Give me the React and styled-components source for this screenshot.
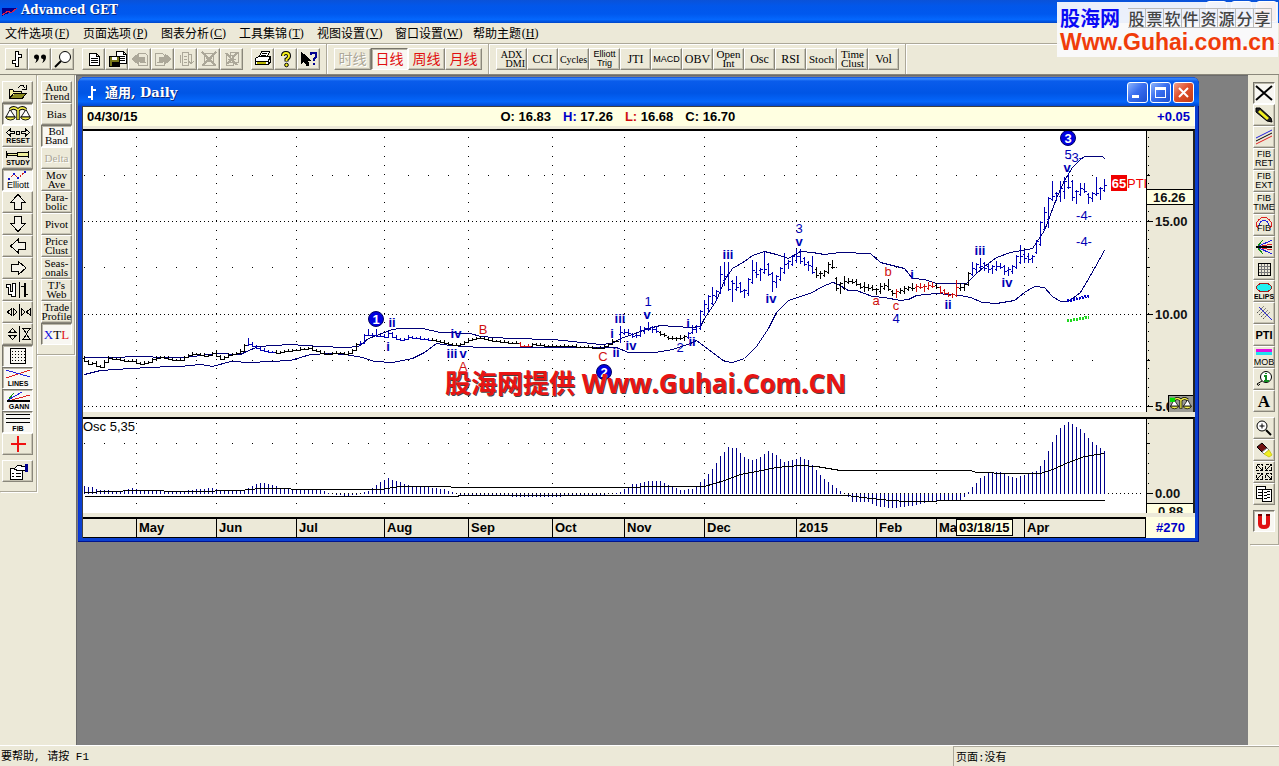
import React from 'react'
import styled, { createGlobalStyle, css } from 'styled-components'

const face = '#ece9d8'
const ink = '#00008b'
const cjk = '"Liberation Mono", "Noto Sans CJK SC", monospace'
const caption = '"DejaVu Serif", "Noto Sans CJK SC", serif'

const GlobalStyle = createGlobalStyle`
  * {
    box-sizing: border-box;
  }

  body {
    margin: 0;
    background: ${face};
    color: #000;
    font-family: 'Liberation Sans', 'Noto Sans CJK SC', sans-serif;
  }

  button {
    margin: 0;
    padding: 0;
    font: inherit;
    color: inherit;
  }

  svg {
    display: block;
  }
`

const Shell = styled.div`
  display: flex;
  flex-direction: column;
  min-height: 100vh;
  position: relative;
  overflow: hidden;
`

const TitleBar = styled.header`
  display: flex;
  align-items: center;
  gap: 4px;
  height: 23px;
  padding: 0 2px;
  color: #fff;
  font: bold 12px/16px ${caption};
  background: linear-gradient(#0a52d8, #0257ea 25%, #0058ee 60%, #0467fd 85%, #0045c8);

  h1 {
    flex: 1;
    margin: 0 0 3px;
    font: inherit;
    text-shadow: 1px 1px #0a2a80;
  }
`

const MenuBar = styled.nav`
  display: flex;
  height: 20px;
  padding-left: 5px;
`

const MenuItem = styled.button`
  display: flex;
  border: 0;
  background: none;
  margin-right: 12px;
  font: 12px/20px 'Noto Sans CJK SC', sans-serif;
  white-space: nowrap;

  span {
    width: 18px;
    font: 12px/20px 'Liberation Serif', serif;
    text-align: center;
  }
`

const ToolBar = styled.div`
  display: flex;
  height: 32px;
  border-top: 1px solid #aca899;
  box-shadow: inset 0 1px #fff;
  border-bottom: 1px solid #8a877b;
`

const Strip = styled.div`
  display: flex;
  padding: 4px 6px 0 ${(props) => props.$start || 7}px;
  border-right: 1px solid #aca899;
  box-shadow: 1px 0 #fff;
`

const Group = styled.div`
  display: flex;
  margin-right: ${(props) => props.$after || 0}px;
`

const raised = css`
  border: 1px solid;
  border-color: #fff #8a877b #8a877b #fff;
  box-shadow: inset -1px -1px #c5c2b2;
  background: ${face};
`

const sunken = css`
  border: 1px solid;
  border-color: #77756b #fff #fff #77756b;
  box-shadow: inset 1px 1px #b8b5a6;
  background: #f8f7f2;
`

const Tool = styled.button`
  display: flex;
  align-items: center;
  justify-content: center;
  flex: none;
  width: ${(props) => props.$w || 23}px;
  height: 22px;
  margin-bottom: ${(props) => props.$after || 0}px;
  color: ${(props) => props.$color || '#000'};
  font-family: ${(props) =>
    props.$sans ? '"Liberation Sans", sans-serif' : '"Liberation Serif", "Noto Sans CJK SC", serif'};
  font-size: ${(props) => props.$size || 11}px;
  font-weight: ${(props) => (props.$bold ? 700 : 400)};
  line-height: 9px;
  white-space: pre;
  text-align: center;
  ${(props) => (props.$on ? sunken : raised)}

  &:disabled {
    color: #aca899;
    text-shadow: 1px 1px #fff;
  }
`

const Workspace = styled.div`
  flex: 1;
  display: flex;
  align-items: stretch;
`

const Dock = styled.aside`
  display: flex;
  flex-direction: column;
  align-self: flex-start;
  width: ${(props) => props.$w}px;
  padding: ${(props) => props.$top || 6}px 0 ${(props) => props.$bottom || 9}px ${(props) => props.$start}px;
  border-right: 1px solid #aca899;
  border-bottom: 1px solid #aca899;
  box-shadow: 1px 1px #fff;
`

const Desktop = styled.main`
  flex: 1;
  min-width: 0;
  margin-left: 1px;
  margin-right: 2px;
  padding: 1px 49px 0 1px;
  background: #808080;
  border-left: 1px solid #6b6b6b;
  border-top: 1px solid #6b6b6b;
`

const ChartWindow = styled.section`
  border-radius: 7px 7px 0 0;
  padding: 0 4px 4px;
  background: #0a3fd0;
  box-shadow: inset -1px -1px #00138c, inset 1px 0 #0831d9;
`

const ChartTitle = styled.div`
  display: flex;
  align-items: center;
  gap: 2px;
  height: 29px;
  margin: 0 -4px;
  padding: 2px 5px 0 7px;
  border-radius: 7px 7px 0 0;
  color: #fff;
  background: linear-gradient(#0a4ad8, #3a8cff 6%, #0a5ceb 14%, #0055e5 55%, #0466fb 85%, #0148d2);

  h2 {
    flex: 1;
    margin: 0 0 0 4px;
    font: bold 13px/18px ${caption};
    text-shadow: 1px 1px #0a2a80;
  }
`

const CaptionButton = styled.button`
  width: 21px;
  height: 21px;
  border: 1px solid #fff;
  border-radius: 3px;
  background: ${(props) =>
    props.$close
      ? 'linear-gradient(135deg, #f0a08a, #e0502c 45%, #c23c14)'
      : 'linear-gradient(135deg, #8db4fb, #3a6ff0 45%, #1c4fd0)'};
`

const ChartBody = styled.div`
  background: ${face};
  border-left: 1px solid #404040;
`

const Quote = styled.div`
  display: grid;
  grid-template-columns: 10fr auto 11fr;
  align-items: center;
  height: 20px;
  padding: 0 4px;
  background: #ffffe1;
  border-top: 1px solid #404040;
  border-right: 1px solid #fff;
  font-size: 13px;
  font-weight: 700;
`

const Prices = styled.div`
  display: flex;
  gap: 12px;
`

const Delta = styled.div`
  color: #0000c8;
  text-align: right;
`

const Tint = styled.span`
  color: ${(props) => props.$color};
`

const Pane = styled.div`
  display: flex;
  position: relative;
  height: ${(props) => props.$h}px;
  margin-top: ${(props) => props.$before}px;
  border-top: 2px solid #000;
  border-right: 2px solid #222;
`

const Plot = styled.div`
  flex: 1;
  min-width: 0;
  overflow: hidden;
  background: #fff;
`

const Scale = styled.div`
  width: 47px;
  border-left: 1px solid #000;
`

const Watermark = styled.div`
  position: absolute;
  left: 362px;
  top: 232px;
  color: #e81414;
  font: bold 26px/40px 'Open Sans', 'Noto Sans CJK SC', sans-serif;
  text-shadow: 1px 1px #444;
  white-space: nowrap;
`

const TimeRow = styled.div`
  display: flex;
  position: relative;
  height: 21px;
  margin-top: 4px;
  background: #ffffe1;
`

const Months = styled.div`
  flex: 1;
  display: flex;
  min-width: 0;
  border: 1px solid #000;
  border-top-width: 2px;
  border-left: 0;
  background: ${face};
  font: bold 13px/17px 'Liberation Sans', sans-serif;
`

const Month = styled.div`
  width: ${(props) => props.$w}px;
  padding-left: 2px;
  border-left: ${(props) => (props.$first ? 0 : 1)}px solid #000;
`

const Cursor = styled.div`
  position: absolute;
  left: 873px;
  top: 2px;
  padding: 0 2px;
  border: 1px solid #000;
  background: #ffffe1;
  font: bold 13px/15px 'Liberation Sans', sans-serif;
`

const BarCount = styled.div`
  width: 49px;
  color: #0000c8;
  font: bold 13px/21px 'Liberation Sans', sans-serif;
  text-align: center;
`

const StatusBar = styled.footer`
  display: flex;
  height: 21px;
  border-top: 1px solid #fff;
  font: 11px/22px ${cjk};
`

const Help = styled.div`
  flex: 1;
  padding-left: 1px;
`

const PageInfo = styled.div`
  width: 326px;
  padding-left: 2px;
  border-left: 1px solid #aca899;
  border-top: 1px solid #aca899;
`

const Badge = styled.div`
  position: absolute;
  right: 1px;
  top: 2px;
  width: 221px;
  height: 55px;
  padding: 5px 3px 0;
  overflow: hidden;
  background: rgba(250, 250, 252, 0.94);
  white-space: nowrap;
`

const BadgeTop = styled.div`
  display: flex;
  align-items: center;
  gap: 8px;
  height: 22px;
  color: #0a0af5;
  font: 700 20px/22px 'Noto Sans CJK SC', sans-serif;
`

const Slogan = styled.div`
  display: flex;
  color: #444;
  font: 500 16px/18px 'Noto Sans CJK SC', sans-serif;

  span {
    width: 18px;
    height: 20px;
    border: 1px solid #bbb;
    border-left-width: 0;
    text-align: center;
  }
`

const BadgeUrl = styled.div`
  color: #f03c0a;
  font: bold 23px/26px 'Liberation Sans', sans-serif;
`

const Mark = styled.text`
  font: ${(props) => (props.$bold ? 700 : 400)} ${(props) => props.$size || 13}px 'Liberation Sans', sans-serif;
  text-anchor: ${(props) => props.$anchor || 'middle'};
  fill: ${(props) => props.$color || '#0000b4'};
`

// ---- icons ----

const Icon = ({ w = 20, h = 18, children }) => (
  <svg width={w} height={h} viewBox={`0 0 ${w} ${h}`} fill="none" stroke="#000" shapeRendering="crispEdges" aria-hidden="true">
    {children}
  </svg>
)

const Tag = ({ x, y, size = 8, bold, color = '#000', children }) => (
  <text x={x} y={y} fill={color} stroke="none" textAnchor="middle" fontSize={size} fontWeight={bold ? 700 : 400} fontFamily="Liberation Sans, sans-serif">
    {children}
  </text>
)

const Page = ({ x = 0, y = 0 }) => (
  <g transform={`translate(${x} ${y})`}>
    <path d="M.5 .5H7.5L10.5 3.5V12.5H.5ZM7.5 .5V3.5H10.5" fill="#fff" />
    <path d="M2 5.500H9M2 7.500H9M2 9.500H9" />
  </g>
)

const Scales = ({ small }) => (
  <g shapeRendering="auto">
    <path d="M6 4.500L2 12H11ZM22 4.500L17 12H26Z" fill="#fff" strokeWidth=".9" />
    <path d="M1.500 12H11.500Q10.500 15 6.500 15T1.500 12ZM16.500 12H26.500Q25.500 15 21.500 15T16.500 12Z" fill="#f3ef4a" strokeWidth=".9" />
    <path d="M6 4.500Q10 1 14 5Q18 1 22 4.500M14 4V15" strokeWidth="3.400" />
    <path d="M6 4.500Q10 1 14 5Q18 1 22 4.500M14 4V14.500" stroke="#f3ef4a" strokeWidth="1.600" />
    {small && <path d="M1 2H7V7H1Z" fill="#00e000" stroke="none" />}
  </g>
)

const greyBar = { stroke: '#aca899', strokeWidth: 1 }

const icons = {
  bars: (
    <g>
      <path d="M8.500 1.500H11.500V4.500H14.500V7.500H11.500V16.500H8.500V13.500H5.500V10.500H8.500Z" fill="#fff" />
    </g>
  ),
  quotes: (
    <g fill="#000" stroke="none" shapeRendering="auto">
      <path d="M4 7A2.500 2.500 0 1 1 9 7Q9 11 5 13Q7 10 6 9Q4 9 4 7ZM11 7A2.500 2.500 0 1 1 16 7Q16 11 12 13Q14 10 13 9Q11 9 11 7Z" />
    </g>
  ),
  lens: (
    <g shapeRendering="auto">
      <circle cx="12" cy="7" r="5.500" fill="#fff" />
      <path d="M8 11L2 17" strokeWidth="2" />
    </g>
  ),
  page: <Page x={5} y={3} />,
  save: (
    <g>
      <Page x={9} y={1} />
      <path d="M2.500 6.500H12.500V16.500H2.500Z" fill="#77771a" />
      <path d="M5 7H10V10H5Z" fill="#fff" stroke="none" />
      <path d="M5 12H11V16H5Z" fill="#000" />
    </g>
  ),
  back: (
    <g {...greyBar}>
      <path d="M8.500 3.500H15.500L17.500 5.500V15.500H8.500ZM10 12.500H16" />
      <path d="M2 9L8 4V7H14V11H8V14Z" fill="#aca899" />
    </g>
  ),
  next: (
    <g {...greyBar}>
      <path d="M2.500 3.500H9.500L11.500 5.500V15.500H2.500ZM4 12.500H10" />
      <path d="M18 9L12 4V7H6V11H12V14Z" fill="#aca899" />
    </g>
  ),
  turn: (
    <g {...greyBar}>
      <path d="M6.500 2.500H12.500V15.500H6.500ZM8 6.500H11M8 9.500H11M8 12.500H11M4.500 5V13M12 4H15V13M13 11L15 14L18 11" />
    </g>
  ),
  cut: (
    <g {...greyBar}>
      <path d="M5.500 3.500H14.500V15.500H5.500ZM7 8.500H13M7 11.500H13" />
      <path d="M3 2L17 16M17 2L3 16" strokeWidth="2" />
    </g>
  ),
  cutAll: (
    <g {...greyBar}>
      <path d="M4.500 5.500H11.500V15.500H4.500ZM8.500 2.500H16.500V12.500H8.500ZM6 9.500H14M6 12.500H14" />
      <path d="M4 3L15 15M15 3L5 14" strokeWidth="2" />
    </g>
  ),
  print: (
    <g>
      <path d="M6.500 6.500L8.500 1.500H16.500L14.500 6.500Z" fill="#fff" />
      <path d="M9 3.500H14M8 5.500H13" />
      <path d="M2.500 8.500L5.500 6.500H17.500L15.500 10.500V14.500H2.500ZM17.500 7V12L15.500 14.500M3 11.500H15" fill="#fff" />
      <path d="M4 13H13" stroke="#b8b400" strokeWidth="2" />
    </g>
  ),
  help: (
    <g shapeRendering="auto">
      <path d="M7 6Q7 3 10 3T13 6Q13 8 10.500 9.500V11.500" strokeWidth="4" />
      <path d="M7 6Q7 3 10 3T13 6Q13 8 10.500 9.500V11" stroke="#f6ee1c" strokeWidth="2" />
      <circle cx="10.500" cy="15" r="1.800" fill="#f6ee1c" />
    </g>
  ),
  whatsThis: (
    <g>
      <path d="M2 2V14L5 11L8 16L10 15L8 10H11Z" fill="#000" />
      <path d="M12 5V3H17V7L15 9V11M15 13V15" stroke="#000090" strokeWidth="2" />
    </g>
  ),
  open: (
    <g>
      <path d="M5.500 15.500V6.500H8.500L10 8.500H17.500V11M5.500 15.500L9.500 10.500H22.500L18 15.500Z" fill="#f3ef9a" />
      <path d="M6 15L10 11H21L17 15Z" fill="#8a8a20" stroke="none" />
      <path d="M14 4.500L17 2.500H19L21.500 5.500M22 2V6H18" />
    </g>
  ),
  scales: <Scales />,
  reset: (
    <g>
      <path d="M2.500 5.500L6.500 2V4.500H10.500V6.500H6.500V9ZM25.500 5.500L21.500 2V4.500H17.500V6.500H21.500V9ZM12.500 4.500H15.500V7.500H12.500Z" />
      <Tag x={14} y={16} size={7} bold>RESET</Tag>
    </g>
  ),
  study: (
    <g>
      <path d="M3.500 4.500H13.500V6.500H3.500ZM13.500 3.500H24.500V7.500H13.500ZM2.500 2V9M24.500 2V9" fill="#eeee9a" />
      <Tag x={14} y={16} size={7} bold>STUDY</Tag>
    </g>
  ),
  elliott: (
    <g>
      <path d="M5 8L10 3L14 7L21 1" stroke="#d02020" strokeDasharray="2 1" />
      <path d="M9 2H11V4H9ZM13 6H15V8H13ZM20 0H22V2H20ZM4 7H6V9H4Z" fill="#1414c8" stroke="none" />
      <Tag x={14} y={17} size={9}>Elliott</Tag>
    </g>
  ),
  up: <path d="M14 1.500L6.500 9.500H10.500V16.500H17.500V9.500H21.500Z" fill="#f4f2e8" />,
  down: <path d="M14 16.500L6.500 8.500H10.500V1.500H17.500V8.500H21.500Z" fill="#f4f2e8" />,
  left: <path d="M6.500 9L14.500 2V5.500H21.500V12.500H14.500V16Z" fill="#f4f2e8" />,
  right: <path d="M22 9L14 2V5.500H7.500V12.500H14V16Z" fill="#f4f2e8" />,
  barWidth: (
    <g>
      <path d="M2.500 3.500H6.500V10.500H8.500V2.500H11.500V15.500H7.500V13.500H4.500V6.500H2.500Z" fill="#fff" />
      <path d="M15.500 1V17M20.500 2V16M17 5.500H20M21 13.500H24" />
      <path d="M21.500 2V16" />
    </g>
  ),
  horiz: <path d="M7.500 5.500V12.500L3.500 9ZM9.500 5.500V12.500L13 9ZM15.500 1V17M17.500 5.500V12.500L21 9ZM26.500 5.500V12.500L22.500 9Z" />,
  vert: <path d="M5 7.500H12L8.500 3.500ZM5 10.500H12L8.500 14.500ZM15.500 1V17M19 3.500H26L22.500 8.500ZM19 14.500H26L22.500 9.500Z" />,
  grid: (
    <g>
      <path d="M6.500 1.500H21.500V16.500H6.500Z" />
      <path d="M8 4.500H21M8 7.500H21M8 10.500H21M8 13.500H21" strokeDasharray="1 2" />
    </g>
  ),
  lines: (
    <g>
      <path d="M2 9L26 1" stroke="#e02020" />
      <path d="M2 1L26 8" stroke="#2020e0" />
      <Tag x={14} y={17} size={7} bold>LINES</Tag>
    </g>
  ),
  gann: (
    <g>
      <path d="M4 9L10 2" stroke="#109010" />
      <path d="M4 9L18 1" stroke="#2020e0" />
      <path d="M4 10L26 4" stroke="#e02020" />
      <path d="M3 10H26" strokeWidth="2" />
      <Tag x={15} y={18} size={7} bold>GANN</Tag>
    </g>
  ),
  fib: (
    <g>
      <path d="M2 1.500H26M2 5.500H26M2 9.500H26" />
      <Tag x={14} y={18} size={7} bold>FIB</Tag>
    </g>
  ),
  cross: <path d="M14 1V7M14 11V17M7 9H12M16 9H22M14 7V11M12 9H16" stroke="#f01010" strokeWidth="2" />,
  props: (
    <g>
      <path d="M6.500 6.500H18.500V17.500H6.500Z" fill="#fff" />
      <path d="M8 11.500H10M12 11.500H17M8 14.500H10M12 14.500H17M10 7L14 3L21 5V8L15 9Z" fill="#fff" />
      <path d="M21 2H23V9H21Z" fill="#000090" stroke="#000090" />
    </g>
  ),
  close: <path d="M2 2L18 16M18 2L2 16" strokeWidth="2" shapeRendering="auto" />,
  pencil: (
    <g shapeRendering="auto">
      <path d="M2 2L6 2L17 12L18 16L13 15L2 6Z" fill="#222" />
      <path d="M5 5L14 13" stroke="#f3ef20" strokeWidth="3" />
    </g>
  ),
  channel: (
    <g shapeRendering="auto">
      <path d="M2 10L18 2" stroke="#2020e0" />
      <path d="M2 13L18 5" />
      <path d="M2 16L18 8" stroke="#e02020" />
    </g>
  ),
  arc: (
    <g>
      <path d="M2.500 9A7.500 7.500 0 0 1 17.500 9Q17 12 15 13M2.500 9Q3 12 5 13" stroke="#e02020" />
      <path d="M5.500 9A4.500 4.500 0 0 1 14.500 9" stroke="#2020e0" />
      <Tag x={10} y={15} size={9}>FIB</Tag>
    </g>
  ),
  fan: (
    <g>
      <path d="M3 9L9 2M3 9L9 16" stroke="#109010" />
      <path d="M3 9L18 2M3 9L18 16" stroke="#2020e0" />
      <path d="M3 9L18 6M3 9L18 12" stroke="#e02020" />
      <path d="M2 9H18" strokeWidth="2" />
    </g>
  ),
  smallGrid: (
    <g>
      <path d="M4.500 3.500H16.500V15.500H4.500Z" />
      <path d="M7.500 4V15M10.500 4V15M13.500 4V15M5 6.500H16M5 9.500H16M5 12.500H16" stroke="#777" />
    </g>
  ),
  ellipse: (
    <g>
      <ellipse cx="10" cy="5.500" rx="7.500" ry="4.500" fill="#20f0f0" stroke="#a02020" />
      <Tag x={10} y={17} size={7} bold>ELiPS</Tag>
    </g>
  ),
  fork: (
    <g stroke="#555" shapeRendering="auto">
      <path d="M3 9L10 2M5 11L12 4M7 13L14 6M9 15L16 8" strokeDasharray="2 1" />
      <path d="M5 3L18 16" stroke="#2020e0" />
    </g>
  ),
  mob: (
    <g>
      <path d="M2 2.500H18" stroke="#e010e0" strokeWidth="3" />
      <path d="M2 5.500H18" stroke="#20e0f0" strokeWidth="3" />
      <Tag x={10} y={17} size={9}>MOB</Tag>
    </g>
  ),
  info: (
    <g shapeRendering="auto">
      <circle cx="12" cy="7" r="5.500" fill="#fff" />
      <path d="M8 11L3 14Q4 17 6 14" />
      <path d="M10 6H12V11M10 11H15M12 3V4" stroke="#108a20" strokeWidth="2" />
    </g>
  ),
  zoomIn: (
    <g shapeRendering="auto">
      <circle cx="8" cy="7" r="5" fill="#fff" />
      <path d="M5.500 7H10.500M8 4.500V9.500" />
      <path d="M12 11L17 16" strokeWidth="2" />
    </g>
  ),
  eraser: (
    <g shapeRendering="auto">
      <path d="M3 6L8 2L13 7L8 11Z" fill="#701010" />
      <path d="M8 11L13 7L15 9L10 13Z" fill="#fff" stroke="#777" />
      <path d="M10 13L15 9L18 14L15 16Z" fill="#f3ef20" stroke="#cc2" />
    </g>
  ),
  expand: (
    <g>
      <path d="M2.500 1.500H8.500V7.500H2.500ZM11.500 1.500H17.500V7.500H11.500ZM2.500 10.500H8.500V16.500H2.500ZM11.500 10.500H17.500V16.500H11.500Z" strokeDasharray="3 1" />
      <path d="M3 2L8 7M17 2L12 7M3 16L8 11M17 16L12 11" />
    </g>
  ),
  pages: (
    <g fill="#fff">
      <path d="M2.500 1.500H11.500V13.500H2.500ZM4 5L9 4M4 8L9 7M4 11L9 10" />
      <path d="M8.500 4.500H17.500V16.500H8.500ZM10 8L16 6M10 11L16 9M10 14L16 12" />
    </g>
  ),
  magnet: (
    <g>
      <path d="M6 3V12Q6 15 10 15T14 12V3" stroke="#e01010" strokeWidth="4" shapeRendering="auto" />
      <path d="M4 3H8M12 3H16" stroke="#700000" strokeWidth="2" />
    </g>
  ),
}

// ---- toolbar contents ----

const menus = [
  ['文件选项', 'F'],
  ['页面选项', 'P'],
  ['图表分析', 'C'],
  ['工具集锦', 'T'],
  ['视图设置', 'V'],
  ['窗口设置', 'W'],
  ['帮助主题', 'H'],
]

const topGroups = [
  [['bars'], ['quotes'], ['lens']],
  [['page'], ['save'], ['back', true], ['next', true], ['turn', true], ['cut', true], ['cutAll', true]],
  [['print'], ['help'], ['whatsThis']],
]

const periods = ['时线', '日线', '周线', '月线']

const studies = [
  ['ADX\n   DMI', 10],
  ['CCI', 12],
  ['Cycles', 10],
  ['Elliott\nTrig', 9, true],
  ['JTI', 12],
  ['MACD', 9, true],
  ['OBV', 12],
  ['Open\nInt', 11],
  ['Osc', 12],
  ['RSI', 12],
  ['Stoch', 11],
  ['Time\nClust', 11],
  ['Vol', 12],
]

const leftTools = [
  'open', 'scales', 'reset', 'study', 'elliott', 'up', 'down', 'left', 'right',
  'barWidth', 'horiz', 'vert', 'grid', 'lines', 'gann', 'fib', 'cross', 'props',
]
const leftOn = ['scales', 'elliott', 'grid', 'lines', 'gann', 'fib']

const indicators = [
  'Auto\nTrend', 'Bias', 'Bol\nBand', 'Delta', 'Mov\nAve', 'Para-\nbolic', 'Pivot',
  'Price\nClust', 'Seas-\nonals', "TJ's\nWeb", 'Trade\nProfile', 'XTL',
]

const drawTools = [
  'close', 'pencil', 'channel', 'FIB\nRET', 'FIB\nEXT', 'FIB\nTIME', 'arc', 'fan', 'smallGrid',
  'ellipse', 'fork', 'PTI', 'mob', 'info', 'A', 'zoomIn', 'eraser', 'expand', 'pages', 'magnet',
]

// ---- chart data, in canvas pixels ----

const monthLines = [136, 216, 296, 384, 468, 552, 624, 704, 796, 876, 936, 1024]
const weekDots = [
  84, 104, 124, 156, 176, 196, 232, 252, 272, 312, 332, 348, 368, 408, 428, 448, 488, 508, 528, 544, 564,
  584, 604, 644, 664, 684, 724, 744, 764, 784, 816, 836, 856, 896, 916, 956, 976, 996, 1016, 1036, 1052, 1072, 1092,
]

const months = [
  ['', 53], ['May', 80], ['Jun', 80], ['Jul', 88], ['Aug', 84], ['Sep', 84], ['Oct', 72],
  ['Nov', 80], ['Dec', 92], ['2015', 80], ['Feb', 60], ['Ma', 88], ['Apr', 120],
]

const early = [
  [84, 358], [88, 361], [92, 364], [96, 363], [100, 366], [106, 367], [108, 362], [112, 358], [120, 359],
  [128, 361], [136, 361], [144, 364], [150, 363], [156, 359], [164, 357], [176, 360], [184, 360], [190, 355],
  [200, 354], [208, 356], [216, 353], [224, 359], [232, 355], [240, 353], [244, 351], [248, 345], [252, 344],
  [260, 348], [268, 351], [280, 353], [290, 351], [300, 350], [312, 348], [320, 351], [328, 354], [340, 353],
  [350, 354], [356, 350], [360, 344], [364, 343], [368, 335], [376, 335], [384, 336], [388, 337], [392, 333],
  [396, 337], [404, 340], [412, 337], [420, 338], [428, 339], [440, 341], [448, 343], [456, 345], [464, 344],
  [472, 340], [480, 338], [486, 338], [492, 340], [504, 342], [520, 343], [524, 346], [532, 346], [536, 344],
  [552, 346], [570, 346], [588, 347], [604, 348], [612, 344], [616, 341],
]

// [high, low] for every bar from x = 620 on
const late = [
  [326, 342], [329, 334], [329, 334], [333, 337], [334, 337], [326, 336], [327, 333], [322, 330], [326, 332],
  [326, 332], [331, 335], [333, 336], [336, 339], [336, 339], [337, 340], [335, 339], [335, 340], [332, 338],
  [325, 333], [325, 332], [310, 329], [300, 315], [295, 312], [287, 304], [290, 300], [266, 293], [262, 285],
  [262, 290], [280, 301], [276, 290], [282, 292], [289, 297], [278, 295], [260, 283], [262, 277], [268, 280],
  [252, 273], [263, 275], [272, 291], [275, 287], [267, 280], [253, 273], [260, 268], [255, 265], [249, 262],
  [249, 263], [257, 265], [261, 270], [256, 273], [268, 277], [271, 278], [270, 276], [262, 273], [260, 268],
  [277, 290], [282, 293], [276, 289], [278, 283], [279, 283], [279, 285], [283, 288], [282, 291], [284, 290],
  [285, 290], [288, 294], [283, 293], [283, 289], [279, 290], [290, 295], [289, 297], [288, 293], [286, 293],
  [286, 290], [283, 290], [284, 291], [283, 288], [284, 291], [282, 289], [282, 287], [283, 288], [286, 293],
  [289, 294], [292, 296], [293, 297], [280, 296], [283, 290], [283, 290], [272, 285], [262, 275], [263, 272],
  [258, 268], [262, 270], [263, 272], [265, 273], [261, 270], [263, 268], [265, 274], [267, 275], [265, 273],
  [255, 268], [245, 263], [250, 262], [253, 262], [255, 262], [240, 253], [221, 245], [207, 230], [197, 227],
  [181, 200], [192, 200], [181, 201], [177, 198], [173, 188], [180, 200], [190, 203], [183, 195], [183, 192],
  [193, 203], [192, 201], [177, 195], [187, 199], [179, 191],
]

const upperBand =
  '84,357 110,357 140,356 165,357 185,357 200,355 216,353 240,354 246,351 258,346 290,344 320,346 345,347 358,346 368,338 384,332 392,329 400,328 422,328 440,332 470,333 480,336 510,338 552,339 572,341 600,344 612,343 620,338 632,334 648,328 660,325 690,327 700,326 704,318 716,300 724,280 732,268 744,261 752,255 764,251 776,254 788,258 800,251 812,252 824,254 840,252 870,253 880,262 892,265 904,268 912,278 924,279 936,283 966,283 976,273 984,266 996,257 1010,252 1032,248 1044,230 1056,198 1064,180 1072,167 1080,159 1084,156 1102,156 1105,159'
const lowerBand =
  '84,374 100,370 130,368 170,366 180,366 200,364 212,366 230,361 250,362 290,360 310,354 330,353 345,354 362,357 374,361 392,362 412,358 424,352 436,343 450,345 480,347 552,347 616,347 628,352 655,352 672,349 690,343 696,340 704,346 712,352 724,361 732,362 744,358 756,346 768,328 776,312 788,300 800,296 812,292 822,286 832,282 836,283 848,290 856,290 872,296 884,297 900,300 908,299 916,295 936,293 960,295 970,297 982,302 996,303 1014,300 1024,292 1034,286 1044,287 1052,296 1060,301 1068,301 1080,292 1090,275 1104,250'

const osc = [
  [84, 486], [92, 487], [100, 490], [120, 491], [130, 488], [140, 490], [150, 491], [180, 491], [210, 488],
  [230, 491], [244, 490], [256, 484], [262, 483], [272, 485], [284, 489], [310, 489], [322, 490], [330, 494],
  [345, 496], [356, 495], [368, 491], [372, 488], [380, 482], [388, 478], [396, 481], [408, 485], [424, 487],
  [444, 489], [452, 492], [460, 496], [500, 496], [520, 497], [556, 497], [575, 495], [604, 495], [618, 493],
  [624, 489], [632, 484], [640, 483], [650, 481], [660, 481], [670, 486], [680, 490], [692, 489], [704, 479],
  [712, 469], [720, 456], [728, 447], [736, 448], [744, 457], [752, 460], [760, 457], [768, 451], [776, 455],
  [784, 462], [792, 460], [800, 457], [808, 460], [816, 470], [824, 479], [832, 485], [840, 491], [846, 495],
  [852, 502], [868, 502], [876, 506], [888, 508], [904, 507], [916, 505], [930, 501], [948, 500], [960, 500],
  [966, 495], [972, 487], [980, 478], [988, 473], [1000, 472], [1010, 477], [1016, 478], [1026, 474],
  [1036, 471], [1044, 460], [1052, 442], [1060, 428], [1068, 422], [1080, 429], [1090, 440], [1104, 451],
]
const oscUpper =
  '84,492 136,490 190,491 240,490 260,488 320,489 380,489 400,486 444,486 456,487 630,487 650,486 704,486 724,480 740,474 756,471 776,467 800,465 816,466 840,470 970,470 976,472 1010,473 1040,473 1052,469 1068,462 1084,456 1104,453'
const oscLower = '84,496 456,496 460,495 846,495 870,498 890,500 906,501 930,501 944,500 1104,500'

const marks = [
  [392, 327, 'ii'], [388, 351, 'i'], [456, 338, 'iv'], [452, 358, 'iii'], [463, 358, 'v'],
  [483, 334, 'B', 'r'], [463, 371, 'A', 'r'], [603, 361, 'C', 'r'], [612, 338, 'i'], [620, 323, 'iii'],
  [616, 357, 'ii'], [631, 350, 'iv'], [648, 306, '1'], [647, 319, 'v'], [688, 328, 'i'], [680, 352, '2'],
  [692, 346, 'ii'], [728, 259, 'iii'], [771, 303, 'iv'], [799, 233, '3'], [799, 246, 'v'],
  [888, 276, 'b', 'r'], [912, 279, 'i'], [876, 305, 'a', 'r'], [896, 310, 'c', 'r'], [896, 323, '4'],
  [948, 309, 'ii'], [980, 255, 'iii'], [1007, 287, 'iv'], [1068, 159, '5'], [1075, 162, '-3-'],
  [1067, 172, 'v'], [1084, 220, '-4-'], [1084, 246, '-4-'],
]

const waves = [[376, 319, '1'], [604, 372, '2'], [1068, 138, '3']]

const valueAt = (points, x) => {
  const i = points.findIndex((p) => p[0] >= x)
  if (i <= 0) return points[i === 0 ? 0 : points.length - 1][1]
  const [x0, y0] = points[i - 1]
  const [x1, y1] = points[i]
  return y0 + ((y1 - y0) * (x - x0)) / (x1 - x0)
}

const range = (from, to, step) => {
  const out = []
  for (let n = from; n <= to; n += step) out.push(n)
  return out
}

const barColor = (x) => {
  if ((x >= 520 && x <= 530) || x === 896 || (x >= 916 && x <= 932) || (x >= 940 && x <= 956)) return '#d01010'
  if ((x >= 246 && x <= 272) || (x >= 360 && x <= 430) || (x >= 620 && x <= 656) || (x >= 688 && x <= 812) || x >= 972)
    return '#0000b4'
  return '#000'
}

const bars = [
  ...range(84, 616, 4).map((x, i) => {
    const y = Math.round(valueAt(early, x))
    const next = Math.round(valueAt(early, Math.min(616, x + 4)))
    const spike = [248, 368, 376].includes(x) ? 5 : 0
    return { x, high: Math.min(y, next) - 1 - (i % 3 === 0 ? 1 : 0) - spike, low: Math.max(y, next), open: y, close: next }
  }),
  ...late.map(([high, low], i) => {
    const prev = late[Math.max(0, i - 1)]
    const next = late[Math.min(late.length - 1, i + 1)]
    const clamp = (y) => Math.round(Math.min(low - 1, Math.max(high + 1, y)))
    return { x: 620 + i * 4, high, low, open: clamp((prev[0] + prev[1]) / 2), close: clamp((next[0] + next[1]) / 2) }
  }),
]

const PricePlot = () => (
  <svg width="100%" height="281" role="img" aria-label="Daily price chart">
    <g transform="translate(-83 -131)" shapeRendering="crispEdges" fill="none">
      {monthLines.map((x) =>
        range(137, 406, 9.25).map((y) => <rect key={`${x}-${y}`} x={x} y={Math.round(y)} width="1" height="1" fill="#000" />)
      )}
      {[175, 267, 360].map((y) => weekDots.map((x) => <rect key={`${x}-${y}`} x={x} y={y} width="1" height="1" fill="#000" />))}
      {[221, 314, 406].map((y) => (
        <path key={y} d={`M84 ${y}.500H1142`} stroke="#000" strokeDasharray="1 3" />
      ))}
      <g transform="translate(.5 .5)">
        <polyline points={upperBand} stroke="#000078" />
        <polyline points={lowerBand} stroke="#000078" />
      </g>
      {bars.map(({ x, high, low, open, close }) => (
        <path
          key={x}
          d={`M${x}.5 ${high}V${low + 1}M${x - 1} ${open}.5H${x}M${x + 1} ${close}.5H${x + 3}`}
          stroke={barColor(x)}
        />
      ))}
      <path d="M1067 301L1089 296" stroke="#0000c8" strokeWidth="3" strokeDasharray="2 1" />
      <path d="M1067 321L1089 317" stroke="#20d820" strokeWidth="3" strokeDasharray="2 1" />
      {marks.map(([x, y, label, red]) => (
        <Mark key={`${x}-${y}`} x={x} y={y} $bold={/^[iv]+$/.test(label)} $color={red && '#d01010'}>
          {label}
        </Mark>
      ))}
      {waves.map(([x, y, label]) => (
        <g key={label} shapeRendering="auto">
          <circle cx={x} cy={y} r="7.500" fill="#0000e0" stroke="#000060" />
          <Mark x={x} y={y + 5} $bold $color="#fff">
            {label}
          </Mark>
        </g>
      ))}
      <rect x="1111" y="175" width="16" height="16" fill="#f00000" />
      <Mark x="1119" y="188" $bold $color="#fff">
        65
      </Mark>
      <Mark x="1127" y="188" $anchor="start" $color="#f00000">
        PTI
      </Mark>
    </g>
  </svg>
)

const PriceScale = () => (
  <svg width="46" height="281" role="img" aria-label="Price scale">
    <g transform="translate(-1147 -131)" shapeRendering="crispEdges">
      {range(137, 406, 9.25).map((y) => (
        <rect key={y} x="1148" y={Math.round(y)} width="1" height="1" />
      ))}
      <path d="M1147 175.500H1150M1147 267.500H1150M1147 360.500H1150M1147 221.500H1153M1147 314.500H1153M1147 406.500H1153" stroke="#000" />
      <rect x="1146" y="189.500" width="48" height="15" fill="#ffffe1" stroke="#000" />
      {[['16.26', 202, 1153], ['15.00', 226, 1155], ['10.00', 319, 1155], ['5.00', 411, 1155]].map(([label, y, x]) => (
        <Mark key={label} x={x} y={y} $bold $anchor="start" $color="#111">
          {label}
        </Mark>
      ))}
      <rect x="1168" y="395.500" width="26" height="17" fill="#9a9a94" stroke="#000" />
      <g transform="translate(1169 396) scale(.85)" fill="none" stroke="#000">
        <Scales small />
      </g>
    </g>
  </svg>
)

const OscPlot = () => (
  <svg width="100%" height="94" role="img" aria-label="Oscillator">
    <g transform="translate(-83 -419)" shapeRendering="crispEdges" fill="none">
      {monthLines.map((x) => range(423, 510, 10).map((y) => <rect key={`${x}-${y}`} x={x} y={y} width="1" height="1" fill="#000" />))}
      {weekDots.map((x) => (
        <rect key={x} x={x} y="443" width="1" height="1" fill="#000" />
      ))}
      <path d="M84 493.500H1142" stroke="#000" strokeDasharray="1 3" />
      {range(84, 1104, 4).map((x) => (
        <path key={x} d={`M${x}.5 493.500V${Math.round(valueAt(osc, x))}`} stroke={ink} />
      ))}
      <g transform="translate(.5 .5)">
        <polyline points={oscUpper} stroke="#000" />
        <polyline points={oscLower} stroke="#000" />
      </g>
      <Mark x="83" y="431" $anchor="start" $color="#000">
        Osc 5,35
      </Mark>
    </g>
  </svg>
)

const OscScale = () => (
  <svg width="46" height="94" role="img" aria-label="Oscillator scale">
    <g transform="translate(-1147 -419)" shapeRendering="crispEdges">
      {range(423, 500, 10).map((y) => (
        <rect key={y} x="1148" y={y} width="1" height="1" />
      ))}
      <path d="M1147 443.500H1150M1147 493.500H1153" stroke="#000" />
      <rect x="1146" y="503.500" width="48" height="15" fill="#ffffe1" stroke="#000" />
      <Mark x="1155" y="498" $bold $anchor="start" $color="#111">
        0.00
      </Mark>
      <Mark x="1158" y="516" $bold $anchor="start" $color="#111">
        0.88
      </Mark>
    </g>
  </svg>
)

const DrawTool = ({ name }) => {
  const after = name === 'A' || name === 'pages' ? 5 : 0
  const on = name === 'close' || name === 'magnet'
  if (icons[name]) {
    return (
      <Tool $w={22} $after={after} $on={on} aria-label={name}>
        <Icon>{icons[name]}</Icon>
      </Tool>
    )
  }
  const big = name === 'A'
  return (
    <Tool $w={22} $after={after} $sans={!big} $bold={big || name === 'PTI'} $size={big ? 17 : name === 'PTI' ? 11 : 9}>
      {name}
    </Tool>
  )
}

const App = () => {
  return (
    <Shell>
      <GlobalStyle />
      <TitleBar>
        <Icon w={15} h={14}>
          <path d="M0 3H15L9 7L0 11Z" fill="#000090" stroke="none" />
          <path d="M0 10L6 6L9 8L15 3" stroke="#e02040" />
        </Icon>
        <h1>Advanced GET</h1>
        <CaptionButton aria-label="Minimize program" />
        <CaptionButton aria-label="Restore program" />
        <CaptionButton $close aria-label="Close program" />
      </TitleBar>
      <MenuBar>
        {menus.map(([label, key]) => (
          <MenuItem key={key}>
            {label}
            <span>
              (<u>{key}</u>)
            </span>
          </MenuItem>
        ))}
      </MenuBar>
      <ToolBar>
        <Strip $start={5}>
          {topGroups.map((group, i) => (
            <Group key={i} $after={i < 2 ? 8 : 0}>
              {group.map(([name, disabled]) => (
                <Tool key={name} disabled={disabled} aria-label={name}>
                  <Icon>{icons[name]}</Icon>
                </Tool>
              ))}
            </Group>
          ))}
        </Strip>
        <Strip>
          {periods.map((label, i) => (
            <Tool key={label} $w={37} $size={14} $color="#e01010" $on={i === 1} disabled={i === 0}>
              {label}
            </Tool>
          ))}
        </Strip>
        <Strip>
          {studies.map(([label, size, sans]) => (
            <Tool key={label} $w={31} $size={size} $sans={sans}>
              {label}
            </Tool>
          ))}
        </Strip>
      </ToolBar>
      <Workspace>
        <Dock $w={37} $start={2}>
          {leftTools.map((name) => (
            <Tool key={name} $w={31} $on={leftOn.includes(name)} $after={name === 'cross' ? 5 : 0} aria-label={name}>
              <Icon w={28}>{icons[name]}</Icon>
            </Tool>
          ))}
        </Dock>
        <Dock $w={38} $start={4}>
          {indicators.map((label) => (
            <Tool
              key={label}
              $w={31}
              $size={label === 'XTL' ? 13 : 11}
              $on={label === 'Bol\nBand' || label === 'XTL'}
              disabled={label === 'Delta'}
            >
              {label === 'XTL' ? (
                <>
                  <Tint $color="#1414e0">X</Tint>T<Tint $color="#e01414">L</Tint>
                </>
              ) : (
                label
              )}
            </Tool>
          ))}
        </Dock>
        <Desktop>
          <ChartWindow>
            <ChartTitle>
              <svg width="14" height="16" fill="none" stroke="#fff" strokeWidth="2" shapeRendering="crispEdges" aria-hidden="true">
                <path d="M7 1V15M7 5H11M3 12H7" />
              </svg>
              <h2>通用, Daily</h2>
              <CaptionButton aria-label="Minimize">
                <svg width="19" height="19" aria-hidden="true">
                  <path d="M4 12H11V15H4Z" fill="#fff" />
                </svg>
              </CaptionButton>
              <CaptionButton aria-label="Maximize">
                <svg width="19" height="19" fill="none" stroke="#fff" shapeRendering="crispEdges" aria-hidden="true">
                  <path d="M4.500 5V14.500H14.500V5" />
                  <path d="M4 5H15" strokeWidth="3" />
                </svg>
              </CaptionButton>
              <CaptionButton $close aria-label="Close">
                <svg width="19" height="19" stroke="#fff" strokeWidth="2" aria-hidden="true">
                  <path d="M5 5L14 14M14 5L5 14" />
                </svg>
              </CaptionButton>
            </ChartTitle>
            <ChartBody>
              <Quote>
                <div>04/30/15</div>
                <Prices>
                  <div>O: 16.83</div>
                  <div>
                    <Tint $color="#0000c8">H:</Tint> 17.26
                  </div>
                  <div>
                    <Tint $color="#d01010">L:</Tint> 16.68
                  </div>
                  <div>C: 16.70</div>
                </Prices>
                <Delta>+0.05</Delta>
              </Quote>
              <Pane $h={283} $before={3}>
                <Plot>
                  <PricePlot />
                </Plot>
                <Scale>
                  <PriceScale />
                </Scale>
                <Watermark>股海网提供 Www.Guhai.Com.CN</Watermark>
              </Pane>
              <Pane $h={96} $before={5}>
                <Plot>
                  <OscPlot />
                </Plot>
                <Scale>
                  <OscScale />
                </Scale>
              </Pane>
              <TimeRow>
                <Months>
                  {months.map(([label, width], i) => (
                    <Month key={label} $w={width} $first={i === 0}>
                      {label}
                    </Month>
                  ))}
                </Months>
                <BarCount>#270</BarCount>
                <Cursor>03/18/15</Cursor>
              </TimeRow>
            </ChartBody>
          </ChartWindow>
        </Desktop>
        <Dock $w={29} $start={3} $top={7} $bottom={12}>
          {drawTools.map((name) => (
            <DrawTool key={name} name={name} />
          ))}
        </Dock>
      </Workspace>
      <StatusBar>
        <Help>要帮助, 请按 F1</Help>
        <PageInfo>页面:没有</PageInfo>
      </StatusBar>
      <Badge>
        <BadgeTop>
          股海网
          <Slogan>
            {[...'股票软件资源分享'].map((c) => (
              <span key={c}>{c}</span>
            ))}
          </Slogan>
        </BadgeTop>
        <BadgeUrl>Www.Guhai.com.cn</BadgeUrl>
      </Badge>
    </Shell>
  )
}

export default App
